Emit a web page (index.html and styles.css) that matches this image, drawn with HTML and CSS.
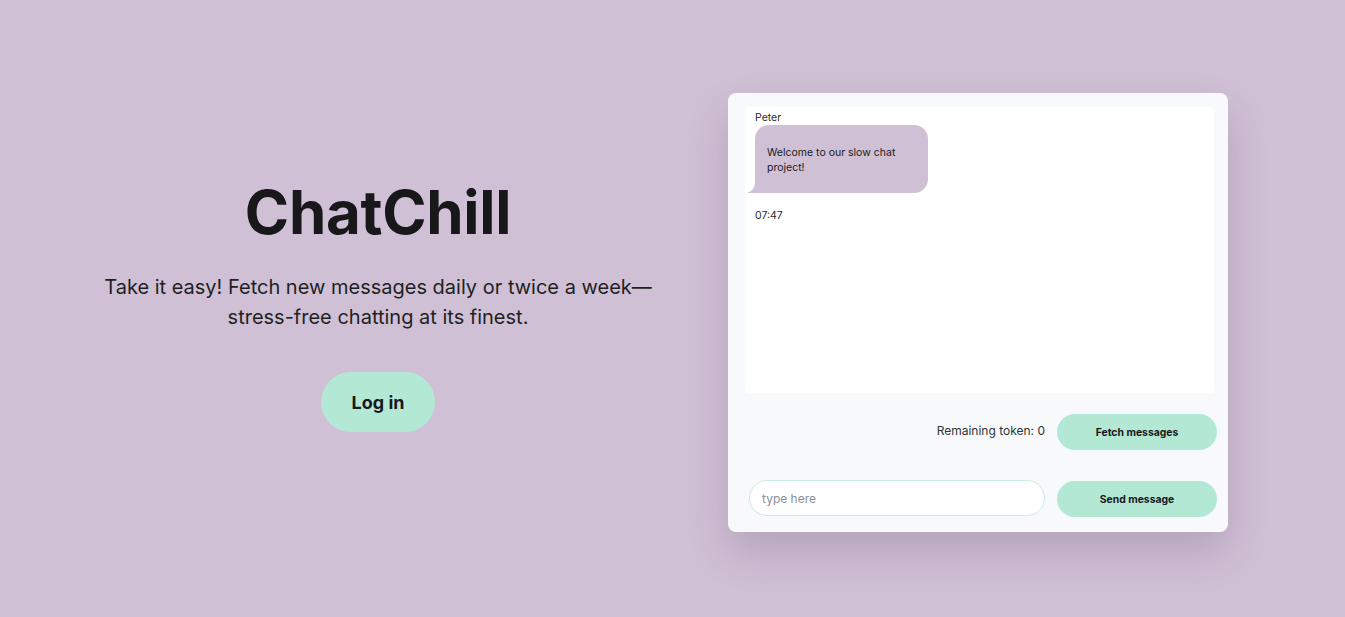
FILE: index.html
```html
<!DOCTYPE html>
<html lang="en">
<head>
<meta charset="utf-8">
<title>ChatChill</title>
<link rel="stylesheet" href="styles.css">
</head>
<body>
<main class="page">
  <section class="hero">
    <h1 class="title">ChatChill</h1>
    <p class="tagline">Take it easy! Fetch new messages daily or twice a week—stress-free chatting at its finest.</p>
    <button class="login">Log in</button>
  </section>
  <section class="chat">
    <div class="messages">
      <div class="msg">
        <div class="sender">Peter</div>
        <div class="bubble">Welcome to our slow chat project!</div>
        <div class="time">07:47</div>
      </div>
    </div>
    <div class="fetch-row">
      <span class="tokens">Remaining token: 0</span>
      <button class="pill">Fetch messages</button>
    </div>
    <div class="send-row">
      <input class="input" type="text" placeholder="type here">
      <button class="pill pill-send">Send message</button>
    </div>
  </section>
</main>
</body>
</html>
```

FILE: styles.css
```css
* { box-sizing: border-box; }
html, body { margin: 0; height: 100%; }
body {
  background: #d0c0d6;
  font-family: Inter, "Noto Sans", sans-serif;
  color: #1a1a1a;
}
.page {
  height: 617px;
  display: flex;
  align-items: flex-start;
  padding: 93px 0 0 88px;
  gap: 60px;
}
.hero {
  width: 580px;
  display: flex;
  flex-direction: column;
  align-items: center;
  text-align: center;
  padding-top: 79px;
}
.title {
  margin: 0;
  font-size: 60px;
  font-weight: 700;
  line-height: 80px;
  letter-spacing: -0.3px;
  color: #18181b;
}
.tagline {
  margin: 20px 0 0;
  width: 560px;
  font-size: 20px;
  line-height: 30px;
  color: #1f1f23;
}
.login {
  margin-top: 40px;
  width: 114px;
  height: 60px;
  border: none;
  border-radius: 30px;
  background: #b3e8d5;
  font-family: Inter, sans-serif;
  font-weight: 700;
  font-size: 18px;
  color: #18181b;
}
.chat {
  width: 500px;
  height: 439px;
  background: #f8f9fb;
  border-radius: 8px;
  box-shadow: 0 20px 40px rgba(60, 30, 70, 0.18);
  padding: 14px 11px 14px 17px;
  display: flex;
  flex-direction: column;
}
.messages {
  height: 286px;
  margin-right: 3px;
  background: #fff;
  border-radius: 4px;
  padding: 3px 10px;
}
.msg { display: flex; flex-direction: column; align-items: flex-start; }
.sender {
  font-size: 10.5px;
  line-height: 15px;
  color: #2a2a2a;
}
.bubble {
  position: relative;
  width: 173px;
  height: 68px;
  background: #d0c0d6;
  border-radius: 14px;
  border-bottom-left-radius: 0;
  padding: 20px 12px 0 12px;
  font-size: 10.5px;
  line-height: 15px;
  color: #1a1a1a;
}
.bubble::before {
  content: "";
  position: absolute;
  left: -7px;
  bottom: 0;
  width: 20px;
  height: 20px;
  background: #d0c0d6;
  border-bottom-right-radius: 14px;
}
.bubble::after {
  content: "";
  position: absolute;
  left: -10px;
  bottom: 0;
  width: 10px;
  height: 20px;
  background: #fff;
  border-bottom-right-radius: 10px;
}
.time {
  margin-top: 15px;
  font-size: 10.5px;
  line-height: 15px;
  color: #2a2a2a;
}
.fetch-row {
  margin-top: 21px;
  display: flex;
  justify-content: flex-end;
  align-items: center;
  gap: 12px;
}
.tokens {
  font-size: 12px;
  color: #333;
  margin-top: -4px;
}
.pill {
  width: 160px;
  height: 36px;
  border: none;
  border-radius: 18px;
  background: #b3e8d5;
  font-family: Inter, sans-serif;
  font-weight: 700;
  font-size: 10.4px;
  color: #18181b;
}
.pill-send { margin-top: 2px; }
.send-row {
  margin-top: 29px;
  display: flex;
  align-items: center;
  gap: 12px;
  padding-left: 4px;
}
.input {
  width: 296px;
  height: 36px;
  border: 1px solid #c6eddf;
  border-radius: 18px;
  background: #fff;
  padding: 0 12px;
  font-family: Inter, sans-serif;
  font-size: 12px;
  color: #333;
  outline: none;
}
.input::placeholder { color: #8a8f98; }
```
